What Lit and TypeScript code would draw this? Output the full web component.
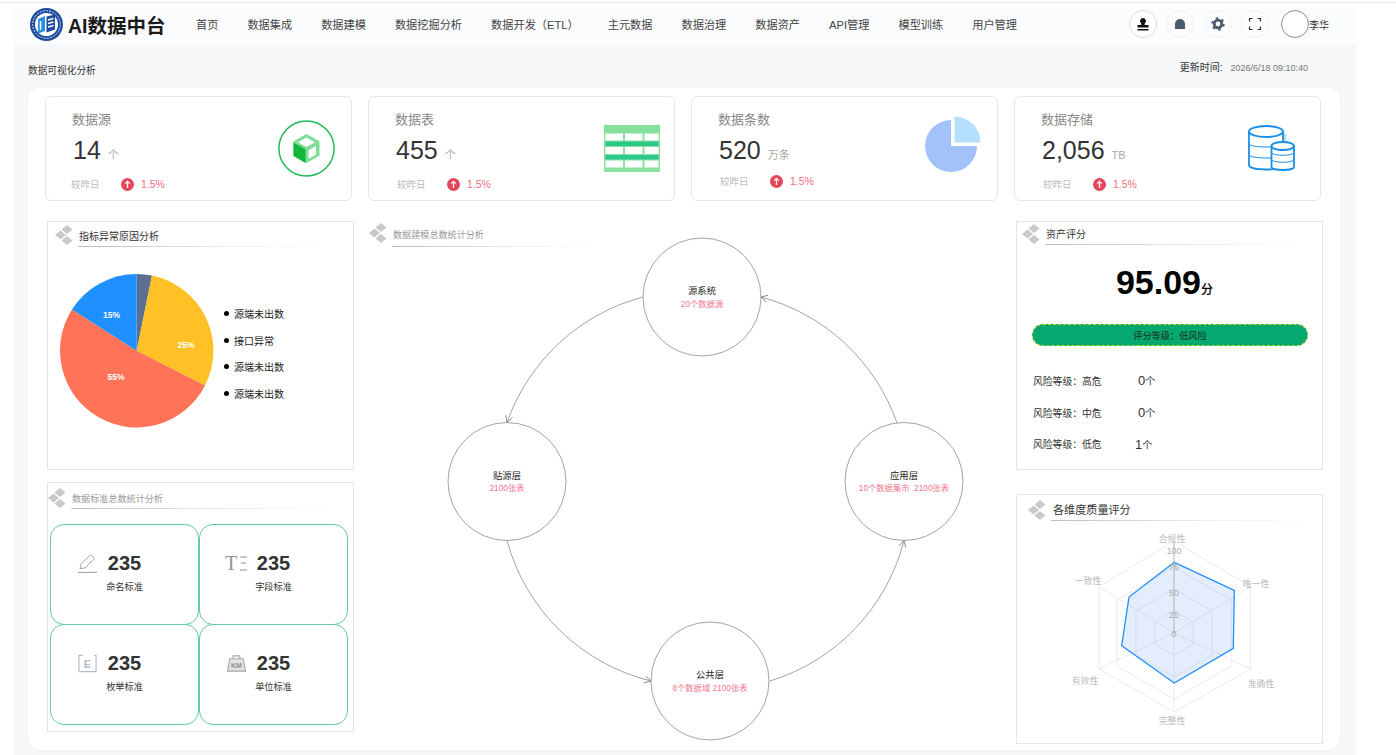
import { LitElement, html, css, svg } from 'lit'
import { customElement } from 'lit/decorators.js'

const NAV = ['首页', '数据集成', '数据建模', '数据挖掘分析', '数据开发（ETL）', '主元数据', '数据治理', '数据资产', 'API管理', '模型训练', '用户管理']

const slice = (cx: number, cy: number, r: number, a: number, b: number) => {
  const p = (d: number) => {
    const t = (d * Math.PI) / 180
    return `${(cx + r * Math.sin(t)).toFixed(2)} ${(cy - r * Math.cos(t)).toFixed(2)}`
  }
  return `M${cx} ${cy}L${p(a)}A${r} ${r} 0 ${b - a > 180 ? 1 : 0} 1 ${p(b)}Z`
}

const hexagon = (cx: number, cy: number, r: number) =>
  [0, 60, 120, 180, 240, 300]
    .map((d) => {
      const t = (d * Math.PI) / 180
      return `${(cx + r * Math.sin(t)).toFixed(1)},${(cy - r * Math.cos(t)).toFixed(1)}`
    })
    .join(' ')

const diamonds = html`<svg class="diamonds" viewBox="0 0 18 20">
  <path d="M12 0l5.500 4.500L12 9 6.500 4.500zM5.500 5.500L11 10l-5.500 4.500L0 10zM12 11l5.500 4.500L12 20l-5.500-4.500z" fill="#c9c9c9" />
</svg>`

const upIcon = html`<svg class="up" viewBox="0 0 13 13">
  <circle cx="6.500" cy="6.500" r="6.500" fill="#e6465a" />
  <path d="M6.500 10V3.400M4.200 5.600l2.300-2.300 2.300 2.300" fill="none" stroke="#fff" stroke-width="1.300" />
</svg>`

const cubeIcon = html`<svg class="ic ic-cube" viewBox="0 0 57 57">
  <circle cx="28.500" cy="28.500" r="27.600" fill="#fff" stroke="#1fbb58" stroke-width="1.500" />
  <path d="M28.500 14l13 7.200v14.600L28.500 43l-13-7.200V21.200z" fill="#7fdd98" />
  <path d="M28.500 17.500l8.500 4.700-8.500 4.700-8.500-4.700z" fill="#fff" />
  <path d="M15.500 22.500l12 6.700V43l-12-7z" fill="#10b738" />
  <path d="M30.500 30.300l7.500-4.200v8.500l-7.500 4.200z" fill="#fff" />
</svg>`

const tableIcon = html`<svg class="ic ic-table" viewBox="0 0 56 47">
  <rect width="56" height="47" fill="#8be2a2" />
  <rect y="0" width="56" height="8" fill="#84e09b" />
  ${[8.5, 22, 35.5].map((y) => svg`
    <rect x="1.500" y=${y} width="17.500" height="7" fill="#fff" />
    <rect x="21" y=${y} width="17.500" height="7" fill="#fff" />
    <rect x="40.500" y=${y} width="14" height="7" fill="#fff" />`)}
  <rect x="1.500" y="16.500" width="53" height="4.500" fill="#2cc78a" />
  <rect x="1.500" y="30" width="53" height="4.500" fill="#2cc78a" />
</svg>`

const pieIcon = html`<svg class="ic ic-pie" viewBox="0 0 56 57">
  <path d="${slice(26, 31, 26, 90, 360)}" fill="#a2c2f9" />
  <path d="${slice(29.5, 27.5, 26, 0, 90)}" fill="#b4dffe" />
</svg>`

const dbIcon = html`<svg class="ic ic-db" viewBox="0 0 47 47" fill="none" stroke="#1a90ea" stroke-width="1.800">
  <path d="M35 7v33c0 6-34 6-34 0V7" fill="#fff" />
  <path d="M35 19c-3 4-31 4-34 0M35 30c-3 4-31 4-34 0" stroke-width="1" />
  <ellipse cx="18" cy="6.500" rx="17" ry="5.500" fill="#fff" stroke-width="2" />
  <rect x="36" y="9" width="2.500" height="10" fill="#b6dcf7" stroke="none" />
  <path d="M23.500 21v21c0 4 22.500 4 22.500 0V21" fill="#fff" />
  <ellipse cx="34.700" cy="21" rx="11.300" ry="4" fill="#fff" stroke-width="2" />
  <path d="M23.500 28c3 3 19.500 3 22.500 0M23.500 35c3 3 19.500 3 22.500 0" stroke-width="1" />
</svg>`

const CARDS = [
  { title: '数据源', value: '14', unit: '个', icon: cubeIcon, foot: 'foot foot--first' },
  { title: '数据表', value: '455', unit: '个', icon: tableIcon, foot: 'foot' },
  { title: '数据条数', value: '520', unit: '万条', icon: pieIcon, foot: 'foot foot--high' },
  { title: '数据存储', value: '2,056', unit: 'TB', icon: dbIcon, foot: 'foot' },
]

const STANDARDS = [
  {
    label: '命名标准',
    icon: html`<svg viewBox="0 0 19 19" fill="none" stroke="#a3a7ad" stroke-width="1">
      <path d="M2 14.500L3 10 12.500.8l4 3.700L7 14z" />
      <path d="M0 18.500h19" stroke-width="1.300" />
    </svg>`,
  },
  {
    label: '字段标准',
    icon: html`<svg class="wide" viewBox="0 -4 22 25" fill="none" stroke="#8d9198" stroke-width="1">
      <text class="serif" x="0" y="15" font-size="20" fill="#8d9198" stroke="none">T</text>
      <path d="M15 2h7M16 8h5M15 15h7" />
    </svg>`,
  },
  {
    label: '枚举标准',
    icon: html`<svg viewBox="0 0 20 19" fill="none" stroke="#b4bac6" stroke-width="1.200">
      <path d="M5 1H1v17h18V1h-2" />
      <text x="6" y="14" font-size="11" font-weight="700" fill="#b4bac6" stroke="none">E</text>
    </svg>`,
  },
  {
    label: '单位标准',
    icon: html`<svg viewBox="0 0 20 18" fill="none" stroke="#a6a8ac" stroke-width="1.200">
      <path d="M6.500 4V1h7v3" />
      <path d="M3 4h14l2.500 13H.5z" fill="#e3e4e6" />
      <text x="10" y="13.500" text-anchor="middle" font-size="7.500" font-weight="700" fill="#8d9096" stroke="none">KM</text>
    </svg>`,
  },
]

const NODES = [
  { cx: 702, cy: 297, name: '源系统', sub: '20个数据源' },
  { cx: 507, cy: 481.5, name: '贴源层', sub: '2100张表' },
  { cx: 904, cy: 481.5, name: '应用层', sub: '10个数据集市  2100张表' },
  { cx: 710, cy: 681, name: '公共层', sub: '8个数据域 2100张表' },
]

const RADAR_OUTER = [
  [1174, 541],
  [1250.7, 586.7],
  [1250.7, 669],
  [1174, 712],
  [1099, 669],
  [1099, 586.7],
]

const RADAR_LABELS = [
  { x: 1172, y: 538, t: '合规性' },
  { x: 1256, y: 583, t: '唯一性' },
  { x: 1261, y: 683, t: '准确性' },
  { x: 1172, y: 720, t: '完整性' },
  { x: 1085, y: 680, t: '有效性' },
  { x: 1088, y: 580, t: '一致性' },
]

const RADAR_TICKS = [
  { y: 551, t: '100' },
  { y: 567, t: '75' },
  { y: 593, t: '50' },
  { y: 615, t: '25' },
  { y: 634, t: '0' },
]

@customElement('app-root')
export class AppRoot extends LitElement {
  static styles = css`
    :host {
      display: block;
      height: 755px;
      overflow: hidden;
      background: #fff;
      padding-top: 2px;
      box-sizing: border-box;
      font-family: "Liberation Sans", "Noto Sans CJK SC", sans-serif;
      color: #333;
    }
    svg { display: block; flex: none; }
    text { font-family: "Liberation Sans", "Noto Sans CJK SC", sans-serif; }
    text.serif { font-family: "Liberation Serif", serif; }

    .topline { height: 1px; background: #e5eaf1; }
    .shell { width: 1342px; height: 752px; margin-left: 14px; background: #f6f7f9; }

    .header {
      display: flex;
      align-items: center;
      height: 42px;
      padding: 0 27px 0 16px;
      background: #fbfcfe;
    }
    .logo { width: 33px; height: 33px; }
    .brand { margin-left: 5px; width: 128px; font-size: 19.500px; font-weight: 700; color: #1a1a1a; white-space: nowrap; }
    .nav { display: flex; gap: 29px; font-size: 11.2px; color: #444; white-space: nowrap; }
    .tools { display: flex; align-items: center; gap: 9.500px; margin-left: auto; }
    .tool {
      display: flex;
      align-items: center;
      justify-content: center;
      width: 28px;
      height: 28px;
      box-sizing: border-box;
      border: 1px solid #f0f1f4;
      border-radius: 50%;
      background: #fcfcfd;
    }
    .tool--on { border-color: #dedede; background: #fff; }
    .tool svg { width: 14px; height: 14px; }
    .avatar { width: 28px; height: 28px; margin-left: 2px; box-sizing: border-box; border: 1px solid #8c8c8c; border-radius: 50%; background: #fff; }
    .user { margin-left: -9px; font-size: 10px; color: #333; }

    .sub { display: flex; justify-content: space-between; height: 43px; padding: 0 48px 0 14px; }
    .crumb { margin-top: 19px; font-size: 9.700px; line-height: 14px; color: #333; }
    .updated { margin-top: 16px; font-size: 10px; line-height: 14px; color: #333; }
    .updated span { margin-left: 8px; font-size: 9px; color: #777; }

    .main {
      width: 1312px;
      height: 662px;
      margin-left: 14px;
      padding: 8px 0 0 17px;
      box-sizing: border-box;
      background: #fff;
      border-radius: 12px;
      box-shadow: 0 1px 3px rgba(0, 0, 0, .05);
    }
    .cards { display: grid; grid-template-columns: repeat(4, 307px); gap: 16px; }
    .card {
      display: flex;
      justify-content: space-between;
      align-items: flex-start;
      height: 105px;
      box-sizing: border-box;
      padding: 16px 0 0 26px;
      border: 1px solid #e5e7eb;
      border-radius: 6px;
      background: #fff;
    }
    .card-title { font-size: 13px; line-height: 14px; color: #888; }
    .card-value { display: flex; align-items: baseline; gap: 7px; margin: 8px 0 0 1px; height: 30px; line-height: 30px; }
    .card-value b { font-size: 25px; font-weight: 400; color: #333; }
    .card-value span { font-size: 11px; color: #aaa; }
    .foot { display: flex; align-items: center; margin: 12px 0 0 2px; height: 14px; font-size: 9.500px; color: #bbb; }
    .foot--first { margin-left: -1px; }
    .foot--high { margin-top: 9px; }
    .up { width: 13px; height: 13px; margin: 0 7.500px 0 21px; }
    .rate { font-size: 10.500px; color: #f0707f; }
    .ic-cube { width: 57px; height: 57px; margin: 7px 16px 0 0; }
    .ic-table { width: 56px; height: 47px; margin: 12px 14px 0 0; }
    .ic-pie { width: 56px; height: 57px; margin: 2px 16px 0 0; }
    .ic-db { width: 47px; height: 47px; margin: 12px 25px 0 0; }

    .lower { display: grid; grid-template-columns: 307px 662px 307px; margin: 20px 0 0 2px; align-items: start; }
    .stack { display: flex; flex-direction: column; }
    .stack--left { gap: 12px; }
    .stack--right { gap: 24px; }
    .panel { box-sizing: border-box; border: 1px solid #e5e5e7; background: #fff; }
    .panel--tall { height: 249px; }
    .panel--std { height: 250px; }
    .panel--quality { height: 250px; }

    .head { display: flex; align-items: flex-start; gap: 5px; padding: 3px 23px 0 7px; }
    .diamonds { width: 18px; height: 20px; }
    .head-title {
      flex: 1;
      margin-top: 5px;
      padding: 0 0 2px 1px;
      font-size: 10px;
      line-height: 14px;
      color: #333;
      white-space: nowrap;
      border-bottom: 1px solid;
      border-image: linear-gradient(90deg, #bdbdbd, #eee 60%, transparent) 1;
    }
    .head--std { padding: 5px 13px 0 0; }
    .head--std .head-title { margin-top: 4px; font-size: 9.100px; color: #999; }
    .head--model { padding: 2px 416px 0 15px; }
    .head--model .head-title { padding-bottom: 4px; font-size: 9.100px; color: #999; }
    .head--score { padding: 2px 12px 0 5px; }
    .head--score .head-title { margin-top: 4px; padding-bottom: 2px; }
    .head--quality { padding: 5px 12px 0 11px; }
    .head--quality .head-title { margin-top: 3px; padding: 0 0 3px 2px; font-size: 11.100px; }

    .cause { display: flex; }
    .cause svg { width: 176px; height: 220px; }
    .legend { margin: 53px 0 0; padding: 0; list-style: none; font-size: 10px; color: #222; }
    .legend li { display: flex; align-items: center; gap: 5px; height: 26.700px; }
    .legend li::before { content: ""; width: 5px; height: 5px; border-radius: 50%; background: #000; }

    .std-grid { display: grid; grid-template-columns: 149px 149px; grid-auto-rows: 100px; margin: 15px 0 0 2px; }
    .std {
      height: 101px;
      box-sizing: border-box;
      padding-top: 26px;
      border: 1px solid #66c9a9;
      border-radius: 14px;
    }
    .std-row { display: grid; grid-template-columns: 1fr auto 1fr; align-items: center; height: 24px; }
    .std-row svg { justify-self: end; width: 19px; height: 19px; margin-right: 11px; }
    .std-row svg.wide { width: 22px; height: 25px; margin-right: 10px; }
    .std-row b { font-size: 20px; color: #333; }
    .std-label { margin-top: 6px; font-size: 9.200px; line-height: 12px; text-align: center; color: #333; }

    .model { position: relative; height: 525px; }
    .model svg.canvas { position: absolute; inset: 0; width: 662px; height: 525px; }

    .score { display: flex; justify-content: center; align-items: baseline; margin-top: 18px; padding-right: 10px; font-weight: 700; color: #000; }
    .score b { font-size: 34px; line-height: 38px; }
    .score span { font-size: 12px; font-weight: 400; -webkit-text-stroke: .3px #000; }
    .level {
      display: flex;
      align-items: center;
      justify-content: center;
      height: 22px;
      margin: 23px 14px 0 15px;
      box-sizing: border-box;
      border: 1px dashed #b9d637;
      border-radius: 11px;
      background: #05a96f;
      font-size: 9.200px;
      color: #1d2b22;
    }
    .risks { margin: 19px 0 0 16px; }
    .risk { display: flex; align-items: center; height: 31.800px; font-size: 9.800px; color: #333; }
    .risk > span:first-child { width: 105px; }
    .risk b { font-size: 13px; font-weight: 400; }
    .risk i { font-size: 10px; font-style: normal; }
    .risk--low .risk-val { margin-left: -3px; }

    .radar { width: 305px; height: 221px; }
  `

  render () {
    return html`
      <div class="topline"></div>
      <div class="shell">
        <header class="header">
          ${this.renderLogo()}
          <div class="brand">AI数据中台</div>
          <nav class="nav">${NAV.map((n) => html`<span>${n}</span>`)}</nav>
          <div class="tools">
            <div class="tool tool--on">
              <svg viewBox="0 0 14 14"><path d="M7 1a3 3 0 0 1 2 5.200c-.5.500-.5 1.300 0 1.800h3.500v2.500h-11V8H5c.5-.5.500-1.300 0-1.800A3 3 0 0 1 7 1zM1.500 12h11v1.500h-11z" fill="#111" /></svg>
            </div>
            <div class="tool">
              <svg viewBox="0 0 14 14"><path d="M2 12V7a5 5 0 0 1 10 0v5z" fill="#4c5a6e" /></svg>
            </div>
            <div class="tool">
              <svg viewBox="0 0 14 14" fill="none" stroke="#4c5a6e">
                <circle cx="7" cy="7" r="3.800" stroke-width="2.800" />
                <circle cx="7" cy="7" r="5.900" stroke-width="1.600" stroke-dasharray="2.600 3.580" />
              </svg>
            </div>
            <div class="tool">
              <svg viewBox="0 0 14 14" fill="none" stroke="#333" stroke-width="1.200"><path d="M1.500 4.500v-3h3M9.500 1.500h3v3M12.500 9.500v3h-3M4.500 12.500h-3v-3" /></svg>
            </div>
            <div class="avatar"></div>
            <div class="user">李华</div>
          </div>
        </header>

        <div class="sub">
          <div class="crumb">数据可视化分析</div>
          <div class="updated">更新时间:<span>2026/6/18 09:10:40</span></div>
        </div>

        <main class="main">
          <section class="cards">
            ${CARDS.map((c) => html`
              <article class="card">
                <div>
                  <div class="card-title">${c.title}</div>
                  <div class="card-value"><b>${c.value}</b><span>${c.unit}</span></div>
                  <div class=${c.foot}>较昨日${upIcon}<span class="rate">1.5%</span></div>
                </div>
                ${c.icon}
              </article>`)}
          </section>

          <section class="lower">
            <div class="stack stack--left">
              <div class="panel panel--tall">
                <div class="head">${diamonds}<div class="head-title">指标异常原因分析</div></div>
                <div class="cause">
                  ${this.renderPie()}
                  <ul class="legend">
                    <li>源端未出数</li>
                    <li>接口异常</li>
                    <li>源端未出数</li>
                    <li>源端未出数</li>
                  </ul>
                </div>
              </div>
              <div class="panel panel--std">
                <div class="head head--std">${diamonds}<div class="head-title">数据标准总数统计分析</div></div>
                <div class="std-grid">
                  ${STANDARDS.map((s) => html`
                    <div class="std">
                      <div class="std-row">${s.icon}<b>235</b></div>
                      <div class="std-label">${s.label}</div>
                    </div>`)}
                </div>
              </div>
            </div>

            <div class="model">
              <div class="head head--model">${diamonds}<div class="head-title">数据建模总数统计分析</div></div>
              ${this.renderDiagram()}
            </div>

            <div class="stack stack--right">
              <div class="panel panel--tall">
                <div class="head head--score">${diamonds}<div class="head-title">资产评分</div></div>
                <div class="score"><b>95.09</b><span>分</span></div>
                <div class="level">评分等级：低风险</div>
                <div class="risks">
                  <div class="risk"><span>风险等级：高危</span><span class="risk-val"><b>0</b><i>个</i></span></div>
                  <div class="risk"><span>风险等级：中危</span><span class="risk-val"><b>0</b><i>个</i></span></div>
                  <div class="risk risk--low"><span>风险等级：低危</span><span class="risk-val"><b>1</b><i>个</i></span></div>
                </div>
              </div>
              <div class="panel panel--quality">
                <div class="head head--quality">${diamonds}<div class="head-title">各维度质量评分</div></div>
                ${this.renderRadar()}
              </div>
            </div>
          </section>
        </main>
      </div>
    `
  }

  renderLogo () {
    return html`<svg class="logo" viewBox="0 0 33 33">
      <circle cx="16.500" cy="16.500" r="16.500" fill="#1d4a9c" />
      <circle cx="16.500" cy="16.500" r="13.800" fill="none" stroke="#dfe8f6" stroke-width="1" stroke-dasharray="2 1.200" />
      <circle cx="16.500" cy="16.500" r="11.500" fill="#fff" />
      <path d="M8 11l7-3v15l-7 2.500z" fill="#2a8fe0" />
      <path d="M16.500 8.500l8.500-2v15l-8.500 3z" fill="#1d4a9c" />
      <path d="M18 12l5.500-1.500M18 15.500l5.500-1.500M18 19l5.500-1.500" stroke="#fff" stroke-width="1.300" />
      <path d="M10.500 13v9" stroke="#fff" stroke-width="1.500" />
    </svg>`
  }

  renderPie () {
    return html`<svg viewBox="48 247 176 220">
      <path d="${slice(136.7, 350.7, 76.7, 0, 11.5)}" fill="#5d7092" />
      <path d="${slice(136.7, 350.7, 76.7, 11.5, 117)}" fill="#ffc125" />
      <path d="${slice(136.7, 350.7, 76.7, 117, 302.5)}" fill="#ff7358" />
      <path d="${slice(136.7, 350.7, 76.7, 302.5, 360)}" fill="#1f90ff" />
      <g fill="#fff" font-size="8.500" font-weight="700" text-anchor="middle">
        <text x="111.500" y="318">15%</text>
        <text x="186" y="348">25%</text>
        <text x="116" y="380">55%</text>
      </g>
    </svg>`
  }

  renderDiagram () {
    return html`<svg class="canvas" viewBox="354 221 662 525">
      <defs>
        <marker id="arrow" markerWidth="9" markerHeight="9" refX="7.500" refY="4" orient="auto" markerUnits="userSpaceOnUse">
          <path d="M1 .5L7.500 4 1 7.500" fill="none" stroke="#777" stroke-width=".8" />
        </marker>
      </defs>
      <g fill="none" stroke="#8c8c8c" stroke-width=".8">
        <path d="M643 297A198 198 0 0 0 507 422.500" marker-end="url(#arrow)" />
        <path d="M507 540.500A198 198 0 0 0 651 681" marker-end="url(#arrow)" />
        <path d="M770 681A198 198 0 0 0 904 540.500" marker-end="url(#arrow)" />
        <path d="M897 423A198 198 0 0 0 761 297" marker-end="url(#arrow)" />
      </g>
      ${NODES.map((n) => svg`
        <circle cx=${n.cx} cy=${n.cy} r="59" fill="#fff" stroke="#8c8c8c" stroke-width=".8" />
        <text x=${n.cx} y=${n.cy - 3} text-anchor="middle" font-size="9.300" fill="#222">${n.name}</text>
        <text x=${n.cx} y=${n.cy + 9.500} text-anchor="middle" font-size="8.300" fill="#f5768f" xml:space="preserve">${n.sub}</text>`)}
    </svg>`
  }

  renderRadar () {
    const cx = 1174
    const cy = 633
    return html`<svg class="radar" viewBox="1017 521 305 221">
      <g fill="none" stroke="#ececec" stroke-width="1">
        ${[22, 44, 66].map((r) => svg`<polygon points=${hexagon(cx, cy, r)} />`)}
        <polygon points=${RADAR_OUTER.map((p) => p.join(',')).join(' ')} />
        ${RADAR_OUTER.slice(1).map((p) => svg`<path d="M${cx} ${cy}L${p[0]} ${p[1]}" />`)}
      </g>
      <polygon points="1174.3,562.3 1234.3,590.3 1233.3,648.3 1174.3,683 1121.7,645.7 1129,597" fill="#1e6fe0" fill-opacity=".12" stroke="#1e8fff" stroke-width="1.300" />
      <path d="M${cx} ${cy}V541" stroke="#b3b3b3" stroke-width="1" />
      <g font-size="8.800" fill="#bbb" text-anchor="middle">
        ${RADAR_LABELS.map((l) => svg`<text x=${l.x} y=${l.y + 4}>${l.t}</text>`)}
      </g>
      <g font-size="8.800" fill="#aaa" text-anchor="middle">
        ${RADAR_TICKS.map((l) => svg`<text x=${cx} y=${l.y + 3}>${l.t}</text>`)}
      </g>
    </svg>`
  }
}
